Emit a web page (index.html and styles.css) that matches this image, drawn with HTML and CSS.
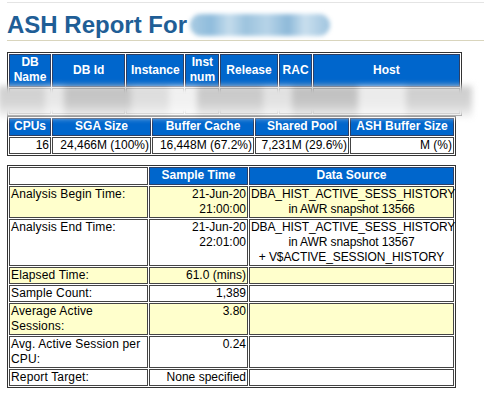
FILE: index.html
```html
<!DOCTYPE html>
<html>
<head>
<meta charset="utf-8">
<link rel="stylesheet" href="styles.css">
</head>
<body>
<div class="page">
  <div class="topline"></div>
  <h1 class="title">ASH Report For<span class="name-smudge"></span></h1>

  <div class="t1wrap">
    <table class="awr t1">
      <colgroup><col class="w42"><col class="w73"><col class="w58"><col class="w34"><col class="w57"><col class="w33"><col class="w147"></colgroup>
      <tr>
        <th>DB<br>Name</th><th>DB Id</th><th>Instance</th><th>Inst<br>num</th><th>Release</th><th>RAC</th><th>Host</th>
      </tr>
      <tr class="hidden-row">
        <td></td><td></td><td></td><td></td><td></td><td></td><td></td>
      </tr>
    </table>
    <div class="row-smudge"></div>
  </div>

  <table class="awr t2">
    <colgroup><col class="w42"><col class="w99"><col class="w102"><col class="w94"><col class="w104"></colgroup>
    <tr><th>CPUs</th><th>SGA Size</th><th>Buffer Cache</th><th>Shared Pool</th><th>ASH Buffer Size</th></tr>
    <tr>
      <td class="nc r">16</td><td class="nc r">24,466M (100%)</td><td class="nc r">16,448M (67.2%)</td><td class="nc r">7,231M (29.6%)</td><td class="nc r">M (%)</td>
    </tr>
  </table>

  <table class="awr t3">
    <colgroup><col class="w139"><col class="w99"><col class="w205"></colgroup>
    <tr><td class="nc blank"></td><th>Sample Time</th><th>Data Source</th></tr>
    <tr>
      <td class="c lbl">Analysis Begin Time:</td>
      <td class="c r">21-Jun-20<br>21:00:00</td>
      <td class="c ctr">DBA_HIST_ACTIVE_SESS_HISTORY<br>in AWR snapshot 13566</td>
    </tr>
    <tr>
      <td class="nc lbl">Analysis End Time:</td>
      <td class="nc r">21-Jun-20<br>22:01:00</td>
      <td class="nc ctr">DBA_HIST_ACTIVE_SESS_HISTORY<br>in AWR snapshot 13567<br>+ V$ACTIVE_SESSION_HISTORY</td>
    </tr>
    <tr><td class="c lbl">Elapsed Time:</td><td class="c r">61.0 (mins)</td><td class="c"></td></tr>
    <tr><td class="nc lbl">Sample Count:</td><td class="nc r">1,389</td><td class="nc"></td></tr>
    <tr><td class="c lbl">Average Active<br>Sessions:</td><td class="c r">3.80</td><td class="c"></td></tr>
    <tr><td class="nc lbl">Avg. Active Session per<br>CPU:</td><td class="nc r">0.24</td><td class="nc"></td></tr>
    <tr><td class="nc lbl">Report Target:</td><td class="nc r">None specified</td><td class="nc"></td></tr>
  </table>
</div>
</body>
</html>
```
FILE: styles.css
```css
body {
  margin: 0;
  background: #fff;
  color: #000;
  font-family: "Liberation Sans", Arial, sans-serif;
}

.page {
  padding: 2px 0 0 7px;
}

.topline {
  border-top: 1px solid #e4e4e4;
}

.title {
  margin: 8px 0 0;
  padding: 0 0 1px;
  font: bold 24px "Liberation Sans", Arial, sans-serif;
  color: #1f5e96;
  border-bottom: 1px solid #d9d5bd;
}

.name-smudge {
  display: inline-block;
  width: 140px;
  height: 22px;
  margin-left: 3px;
  vertical-align: -3px;
  border-radius: 11px;
  background: linear-gradient(90deg, #a9cbe2 0%, #8fbcdc 15%, #c4dcec 28%, #9cc3de 40%, #b7d4e8 55%, #8db9d9 70%, #c9dfee 82%, #9fc4df 100%);
  filter: blur(2px);
}

.awr {
  border-collapse: separate;
  border-spacing: 1px;
  border: 1px solid #333;
  table-layout: fixed;
}

.awr th {
  background: #0066cc;
  color: #fff;
  font: bold 12px/15px "Liberation Sans", Arial, sans-serif;
  padding: 0 3px 1px;
  border: 1px solid #2b3f66;
  text-align: center;
  vertical-align: middle;
}

.awr td {
  font: 12px/15px "Liberation Sans", Arial, sans-serif;
  padding: 0 1px;
  border: 1px solid #444;
  vertical-align: top;
}

.awr td.c { background: #ffffcc; }
.awr td.nc { background: #fff; }
.awr td.r { text-align: right; }
.awr td.ctr { text-align: center; letter-spacing: -0.1px; }
.awr td.lbl { letter-spacing: 0.15px; }
.awr td.blank { height: 16px; }

.t1wrap {
  position: relative;
  margin-top: 11px;
}

.t1 { width: 455px; }
.t2 { width: 449px; }
.t3 { width: 449px; margin-top: 9px; }

.hidden-row td { height: 24px; }

.row-smudge {
  position: absolute;
  left: -9px;
  top: 34px;
  width: 474px;
  height: 31px;
  background:
    linear-gradient(180deg, rgba(255,255,255,0) 0%, rgba(255,255,255,0.1) 55%, rgba(255,255,255,0.75) 100%),
    linear-gradient(90deg, #d0d0d0 0 10%, #e6e6e6 10% 14%, #c2c2c2 14% 28%, #dcdcdc 28% 36%, #f0f0f0 36% 42%, #c8c8c8 42% 56%, #e0e0e0 56% 62%, #bfbfbf 62% 76%, #eaeaea 76% 86%, #cecece 86% 100%);
  filter: blur(3px);
}

col.w33 { width: 33px; }
col.w34 { width: 34px; }
col.w42 { width: 42px; }
col.w57 { width: 57px; }
col.w58 { width: 58px; }
col.w73 { width: 73px; }
col.w94 { width: 94px; }
col.w99 { width: 99px; }
col.w102 { width: 102px; }
col.w104 { width: 104px; }
col.w139 { width: 139px; }
col.w147 { width: 147px; }
col.w205 { width: 205px; }
```
